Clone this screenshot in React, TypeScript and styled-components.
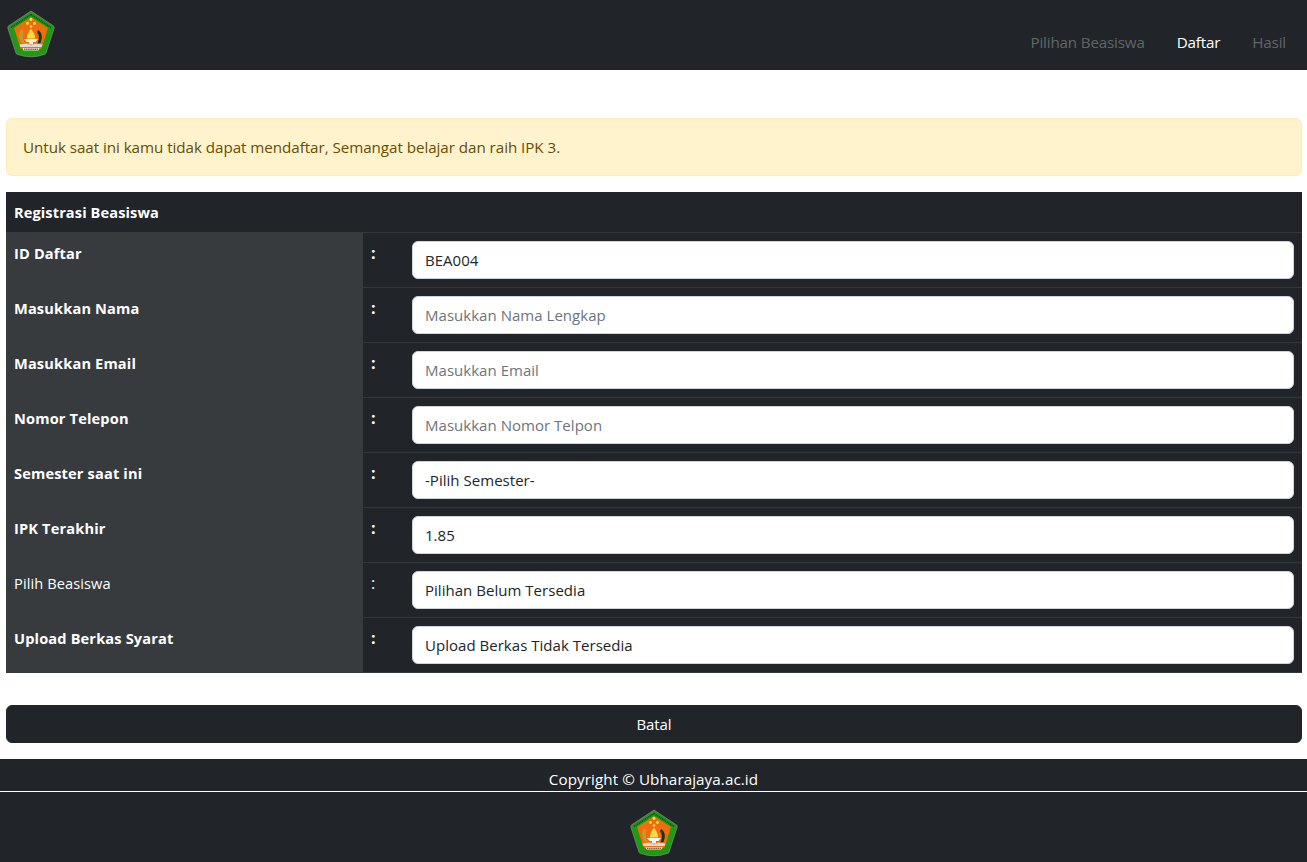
import React from "react";
import styled, { createGlobalStyle } from "styled-components";

const Global = createGlobalStyle`
  html, body { margin: 0; padding: 0; background: #fff; }
  body { font-family: "Open Sans", "Noto Sans", "Liberation Sans", sans-serif; font-size: 16px; line-height: 24px; color: #212529; }
  * { box-sizing: border-box; }
`;

const Page = styled.div`
  width: 1307px;
  height: 862px;
  overflow: hidden;
  display: flex;
  flex-direction: column;
`;
const Navbar = styled.nav`
  height: 70px;
  background: #212529;
  display: flex;
  justify-content: space-between;
  padding: 10px 5px 0 7px;
`;
const NavLinks = styled.div`
  display: flex;
  align-items: center;
  padding-top: 16px;
  height: 48px;
`;
const NavLink = styled.a<{ $active?: boolean }>`
  padding: 0 16px;
  font-size: 15.2px;
  letter-spacing: -0.17px;
  color: ${(p) => (p.$active ? "#fff" : "rgba(255,255,255,0.3)")};
`;
const Main = styled.main`
  padding: 48px 5px 0 6px;
  display: flex;
  flex-direction: column;
`;
const Alert = styled.div`
  height: 58px;
  padding: 16px;
  background: #fff3cd;
  border: 1px solid #ffecb5;
  border-radius: 6px;
  color: #664d03;
  font-size: 15.2px;
  letter-spacing: -0.05px;
  margin-bottom: 16px;
`;
const FormTable = styled.div`
  display: grid;
  grid-template-columns: 357px 49px 1fr;
  background: #212529;
  color: #fff;
  border-bottom: 1px solid #32383e;
`;
const TableHead = styled.div`
  grid-column: 1 / -1;
  height: 40px;
  padding: 8px;
  font-size: 14.6px;
  font-weight: 700;
  letter-spacing: 0.1px;
`;
const LabelCell = styled.div<{ $plain?: boolean }>`
  height: 55px;
  padding: 8px;
  background: #373b3e;
  font-size: 14.6px;
  letter-spacing: ${(p) => (p.$plain ? "0.1px" : "0.15px")};
  font-weight: ${(p) => (p.$plain ? 400 : 700)};
  border-top: 1px solid #373b3e;
`;
const ColonCell = styled.div<{ $plain?: boolean }>`
  height: 55px;
  padding: 8px;
  font-weight: ${(p) => (p.$plain ? 400 : 700)};
  border-top: 1px solid #32383e;
`;
const InputCell = styled.div`
  height: 55px;
  padding: 8px 8px 0 0;
  border-top: 1px solid #32383e;
`;
const Field = styled.div<{ $placeholder?: boolean }>`
  height: 38px;
  padding: 6px 12px;
  background: #fff;
  border: 1px solid #ced4da;
  border-radius: 6px;
  font-size: 15px;
  letter-spacing: 0.03px;
  color: ${(p) => (p.$placeholder ? "#6c757d" : "#212529")};
`;
const CancelButton = styled.button`
  margin-top: 32px;
  width: 100%;
  height: 38px;
  border: 1px solid #212529;
  border-radius: 6px;
  background: #212529;
  color: #fff;
  font-family: inherit;
  font-size: 15px;
  letter-spacing: -0.1px;
`;
const Footer = styled.footer`
  margin-top: 16px;
  flex: 1;
  background: #212529;
  color: #fff;
  display: flex;
  flex-direction: column;
  align-items: center;
`;
const Copyright = styled.div`
  width: 100%;
  height: 33px;
  padding-top: 8px;
  border-bottom: 1px solid #fff;
  text-align: center;
  font-size: 15.2px;
  letter-spacing: 0.08px;
`;
const FooterLogo = styled.div`
  margin-top: 17px;
  line-height: 0;
`;

const Logo = ({ size }: { size: number }) => (
  <svg width={size} height={size} viewBox="0 0 48 48" aria-hidden="true">
    <path d="M24 0.500 L46.500 15.500 Q48 16.500 47.500 18.500 L39.500 43 Q39 44.500 37 45 Q24 49.500 11 45 Q9 44.500 8.500 43 L0.500 18.500 Q0 16.500 1.500 15.500 Z" fill="#6f7a6c" />
    <path d="M24 1.500 L45.800 16 Q47 16.800 46.600 18.300 L38.700 42.500 Q38.300 43.700 36.600 44 Q24 48.300 11.400 44 Q9.700 43.700 9.300 42.500 L1.400 18.300 Q1 16.800 2.200 16 Z" fill="#1f9a12" />
    <path d="M24 4.500 L44 17.500 M4 17.500 L24 4.500" stroke="#0f4d12" strokeWidth="1.500" strokeDasharray="1.200 0.700" fill="none" />
    <path d="M24 7 L41 18 L34.500 38.500 Q24 41 13.500 38.500 L7 18 Z" fill="#f06d0a" />
    <circle cx="24" cy="9.500" r="1.400" fill="#ffdf5c" />
    <circle cx="20.500" cy="13.500" r="1.400" fill="#ffdf5c" />
    <circle cx="27.500" cy="13.500" r="1.400" fill="#ffdf5c" />
    <circle cx="24" cy="16.500" r="1.300" fill="#ffdf5c" />
    <path d="M24 18.500 C26 22 28.500 25 28 28.500 L20 28.500 C19.500 25 22 22 24 18.500 Z" fill="#f7dc46" />
    <path d="M13.500 20 Q10 27 15 33 L18 33.500 Q14.500 27 16.500 20.500 Z" fill="#c49a2c" />
    <path d="M31.500 20 Q37 25 33.500 33 L30.500 33.500 Q33.500 27 30 22 Z" fill="#12351a" />
    <path d="M17 29 L31 29 L28.500 32 L26 32 L26 34.500 L22 34.500 L22 32 L19.500 32 Z" fill="#f1f1f1" />
    <path d="M12.500 34.500 L20 33.500 L24 35.500 L28 33.500 L35.500 34.500 L34.500 37 L13.500 37 Z" fill="#dcdcdc" />
    <path d="M15.500 38 L32.500 38 L31.500 40.500 L16.500 40.500 Z" fill="#f7e9c8" />
    <path d="M17 39.200 L31 39.200" stroke="#4a2410" strokeWidth="1" strokeDasharray="1.500 0.600" />
  </svg>
);

const rows: { label: string; value: string; placeholder?: boolean; plain?: boolean }[] = [
  { label: "ID Daftar", value: "BEA004" },
  { label: "Masukkan Nama", value: "Masukkan Nama Lengkap", placeholder: true },
  { label: "Masukkan Email", value: "Masukkan Email", placeholder: true },
  { label: "Nomor Telepon", value: "Masukkan Nomor Telpon", placeholder: true },
  { label: "Semester saat ini", value: "-Pilih Semester-" },
  { label: "IPK Terakhir", value: "1.85" },
  { label: "Pilih Beasiswa", value: "Pilihan Belum Tersedia", plain: true },
  { label: "Upload Berkas Syarat", value: "Upload Berkas Tidak Tersedia" },
];

export default function App() {
  return (
    <Page>
      <Global />
      <Navbar>
        <Logo size={48} />
        <NavLinks>
          <NavLink>Pilihan Beasiswa</NavLink>
          <NavLink $active>Daftar</NavLink>
          <NavLink>Hasil</NavLink>
        </NavLinks>
      </Navbar>
      <Main>
        <Alert>Untuk saat ini kamu tidak dapat mendaftar, Semangat belajar dan raih IPK 3.</Alert>
        <FormTable>
          <TableHead>Registrasi Beasiswa</TableHead>
          {rows.map((r) => (
            <React.Fragment key={r.label}>
              <LabelCell $plain={r.plain}>{r.label}</LabelCell>
              <ColonCell $plain={r.plain}>:</ColonCell>
              <InputCell>
                <Field $placeholder={r.placeholder}>{r.value}</Field>
              </InputCell>
            </React.Fragment>
          ))}
        </FormTable>
        <CancelButton>Batal</CancelButton>
      </Main>
      <Footer>
        <Copyright>Copyright © Ubharajaya.ac.id</Copyright>
        <FooterLogo>
          <Logo size={48} />
        </FooterLogo>
      </Footer>
    </Page>
  );
}
